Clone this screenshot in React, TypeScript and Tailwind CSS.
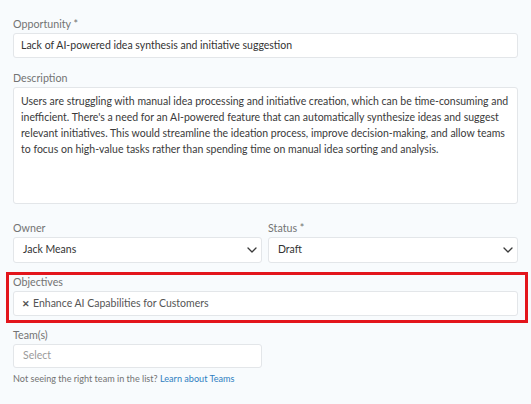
import React from "react";

const Chevron = () => (
  <svg width="10" height="6" viewBox="0 0 10 6" fill="none" className="shrink-0">
    <path d="M1 1l4 4 4-4" stroke="#3a3a3a" strokeWidth="1.3" strokeLinecap="round" strokeLinejoin="round" />
  </svg>
);

export default function App() {
  return (
    <div
      className="w-[531px] h-[404px] bg-[#f8fbfd] pl-[13px] pr-[13px] pt-[17px] overflow-hidden"
      style={{ fontFamily: "Lato, 'Noto Sans', sans-serif" }}
    >
      <div className="text-[10.7px] leading-[14px] text-[#737373] mb-[2px]">Opportunity *</div>
      <div className="h-[25px] bg-white border border-[#e3e6e9] rounded-[3px] flex items-center px-[7px] text-[10.5px] text-[#333]">
        Lack of AI-powered idea synthesis and initiative suggestion
      </div>

      <div className="mt-[13px] text-[10.7px] leading-[14px] text-[#737373] mb-[2px]">Description</div>
      <div className="h-[117px] bg-white border border-[#e3e6e9] rounded-[3px] px-[7px] pt-[5px] text-[10.5px] leading-[16px] text-[#3a3a3a] whitespace-nowrap">
        Users are struggling with manual idea processing and initiative creation, which can be time-consuming and
        <br />
        inefficient. There's a need for an AI-powered feature that can automatically synthesize ideas and suggest
        <br />
        relevant initiatives. This would streamline the ideation process, improve decision-making, and allow teams
        <br />
        to focus on high-value tasks rather than spending time on manual idea sorting and analysis.
      </div>

      <div className="mt-[17px] flex gap-[6px]">
        <div className="w-[249px]">
          <div className="text-[10.7px] leading-[14px] text-[#737373] mb-[2px]">Owner</div>
          <div className="h-[26px] bg-white border border-[#e3e6e9] rounded-[3px] flex items-center justify-between pl-[9px] pr-[4px] text-[10.5px] text-[#333]">
            <span>Jack Means</span>
            <Chevron />
          </div>
        </div>
        <div className="flex-1">
          <div className="text-[10.7px] leading-[14px] text-[#737373] mb-[2px]">Status *</div>
          <div className="h-[26px] bg-white border border-[#e3e6e9] rounded-[3px] flex items-center justify-between pl-[9px] pr-[4px] text-[10.5px] text-[#333]">
            <span>Draft</span>
            <Chevron />
          </div>
        </div>
      </div>

      <div className="relative mt-[12px]">
        <span className="absolute left-[-7px] right-[-10px] top-[-3px] bottom-[-7px] border-[3px] border-[#e3151c] pointer-events-none" />
        <div className="text-[10.7px] leading-[14px] text-[#737373] mb-[2px]">Objectives</div>
        <div className="h-[25px] bg-white border border-[#e3e6e9] rounded-[3px] flex items-center pl-[8px] pr-[7px] text-[10.5px] text-[#555]">
          <span className="text-[9px] font-bold mr-[3px] text-[#555]">✕</span>
          <span>Enhance AI Capabilities for Customers</span>
        </div>
      </div>

      <div className="mt-[12px] w-[249px]">
        <div className="text-[10.7px] leading-[14px] text-[#737373] mb-[2px]">Team(s)</div>
        <div className="h-[24px] bg-white border border-[#e3e6e9] rounded-[3px] flex items-center pl-[9px] text-[10.5px] text-[#9a9a9a]">
          Select
        </div>
      </div>
      <div className="mt-[4px] text-[9.1px] leading-[14px] text-[#737373] whitespace-nowrap">
        Not seeing the right team in the list? <span className="text-[#2f7fc1]">Learn about Teams</span>
      </div>
    </div>
  );
}
